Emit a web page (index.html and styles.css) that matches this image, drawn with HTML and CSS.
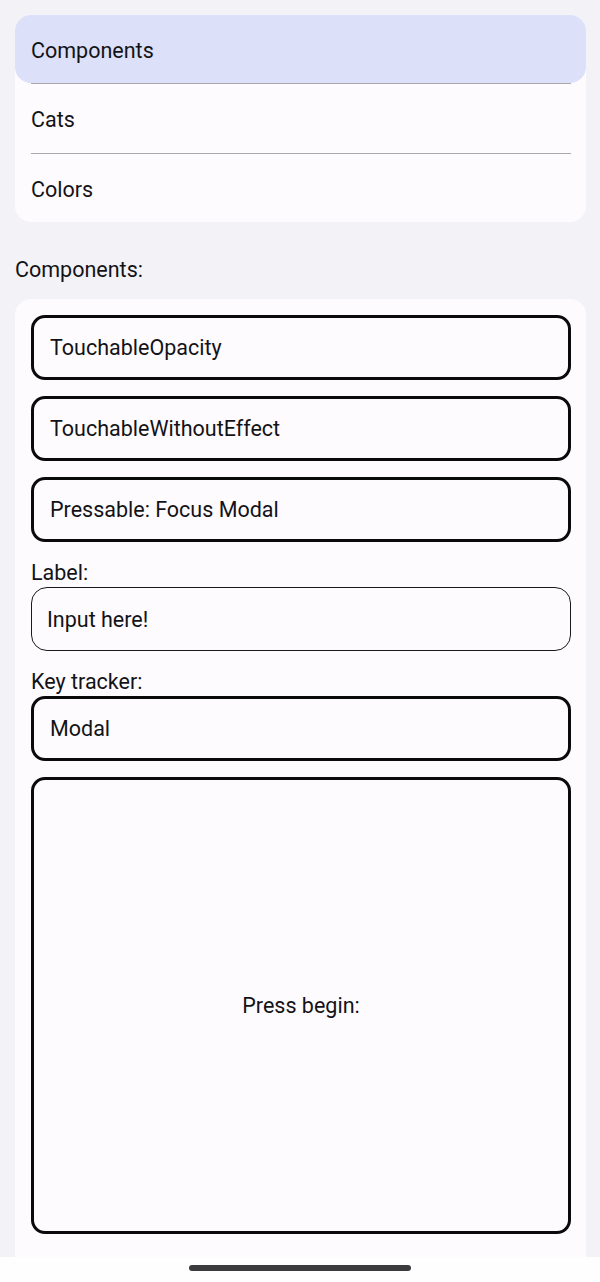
FILE: index.html
```html
<!DOCTYPE html>
<html>
<head>
<meta charset="utf-8">
<link rel="stylesheet" href="styles.css">
</head>
<body>
<div class="page">
  <div class="menu">
    <div class="menu-row active">Components</div>
    <div class="divider"></div>
    <div class="menu-row mid">Cats</div>
    <div class="divider"></div>
    <div class="menu-row">Colors</div>
  </div>
  <div class="heading">Components:</div>
  <div class="card">
    <div class="btn">TouchableOpacity</div>
    <div class="btn">TouchableWithoutEffect</div>
    <div class="btn">Pressable: Focus Modal</div>
    <div class="label">Label:</div>
    <div class="input">Input here!</div>
    <div class="label">Key tracker:</div>
    <div class="btn">Modal</div>
    <div class="big">Press begin:</div>
  </div>
</div>
<div class="navbar"><div class="pill"></div></div>
</body>
</html>
```
FILE: styles.css
```css
html, body {
  margin: 0;
  padding: 0;
}
body {
  background: #f3f2f6;
  font-family: Roboto, "Noto Sans", sans-serif;
  font-size: 21.5px;
  color: #131316;
  width: 600px;
  height: 1282px;
  overflow: hidden;
  display: flex;
  flex-direction: column;
}
.page {
  padding: 15px 14px 0 15px;
  flex: 1;
  display: flex;
  flex-direction: column;
}
.menu {
  background: #fefbff;
  border-radius: 16px;
  display: flex;
  flex-direction: column;
}
.menu-row {
  height: 68px;
  display: flex;
  align-items: center;
  padding-left: 16px;
  padding-top: 2px;
  box-sizing: border-box;
}
.menu-row.mid {
  height: 69px;
}
.menu-row.active {
  background: #dce0f9;
  border-radius: 16px;
}
.divider {
  height: 1px;
  margin: 0 15px 0 16px;
  background: #a9a8ac;
}
.heading {
  margin: 33px 0 15px;
  line-height: 29px;
}
.card {
  flex: 1;
  background: #fefbff;
  border-radius: 16px 16px 0 0;
  padding: 16px 15px 23px 16px;
  display: flex;
  flex-direction: column;
}
.btn {
  height: 65px;
  box-sizing: border-box;
  border: 3px solid #0a0a0a;
  border-radius: 14px;
  display: flex;
  align-items: center;
  padding-left: 16px;
  margin-bottom: 16px;
}
.label {
  line-height: 29px;
}
.input {
  height: 64px;
  box-sizing: border-box;
  border: 1.5px solid #1a1a1a;
  border-radius: 16px;
  display: flex;
  align-items: center;
  padding-left: 15px;
  margin-bottom: 16px;
}
.big {
  flex: 1;
  box-sizing: border-box;
  border: 3px solid #0a0a0a;
  border-radius: 14px;
  display: flex;
  align-items: center;
  justify-content: center;
}
.navbar {
  height: 25px;
  background: #fefefe;
  display: flex;
  justify-content: center;
  align-items: flex-start;
}
.pill {
  margin-top: 8px;
  width: 222px;
  height: 6px;
  border-radius: 3px;
  background: #3b3b3d;
}
```
